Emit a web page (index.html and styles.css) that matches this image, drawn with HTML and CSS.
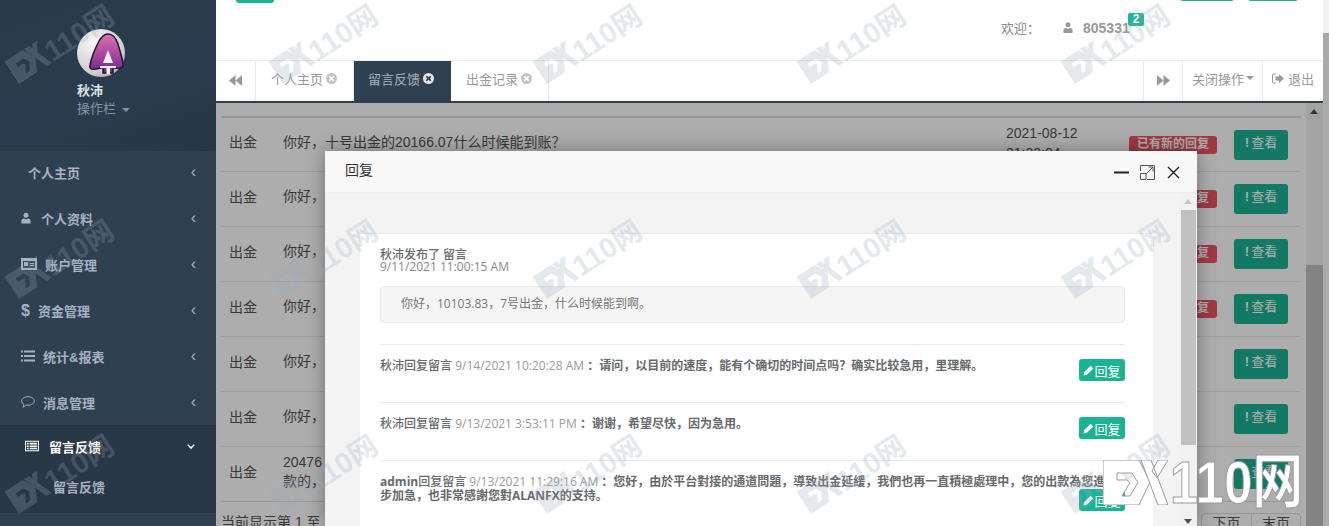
FILE: index.html
```html
<!DOCTYPE html>
<html lang="zh-CN">
<head>
    <meta charset="UTF-8">
    <meta name="viewport" content="width=device-width, initial-scale=1.0">
    <title>留言反馈</title>
    <link rel="stylesheet" href="styles.css">
</head>
<body>
    <svg class="icon-defs" width="0" height="0">
        <symbol id="i-user" viewBox="0 0 12 14"><circle cx="6" cy="3.6" r="3"/><path d="M0.5 13.5V10.5Q0.5 8 3 7.6L6 8.6L9 7.6Q11.500 8 11.500 10.5V13.5Z"/></symbol>
        <symbol id="i-close" viewBox="0 0 12 12"><path fill-rule="evenodd" d="M6 0a6 6 0 1 1 0 12A6 6 0 0 1 6 0ZM4.200 2.900L2.900 4.200L4.700 6L2.900 7.800L4.200 9.100L6 7.300L7.800 9.100L9.100 7.800L7.300 6L9.100 4.200L7.800 2.900L6 4.700Z"/></symbol>
        <symbol id="i-pencil" viewBox="0 0 12 12"><path d="M8.300 0.800L11.200 3.700L4.200 10.700L0.600 11.400L1.300 7.800Z"/></symbol>
        <symbol id="i-fx" viewBox="0 0 65 45">
            <path fill-rule="evenodd" d="M0 0H36L47 22L36 45H0ZM14 13V20H24L27 22.500L19 36H27L35 22.500L29 13Z"/>
            <path d="M38 0H48L65 45H55ZM55 0H65L54 18L49 11Z"/>
        </symbol>
    </svg>

    <div class="page">
        <aside class="sidebar">
            <div class="profile">
                <svg class="avatar" viewBox="0 0 48 48">
                    <defs>
                        <radialGradient id="ball" cx="0.35" cy="0.3" r="0.9">
                            <stop offset="0" stop-color="#f8f8f8"/>
                            <stop offset="0.7" stop-color="#cfcccf"/>
                            <stop offset="1" stop-color="#8a868c"/>
                        </radialGradient>
                        <linearGradient id="badge" x1="0" y1="0" x2="0" y2="1">
                            <stop offset="0" stop-color="#d873b0"/>
                            <stop offset="0.55" stop-color="#a8459c"/>
                            <stop offset="1" stop-color="#5f2a96"/>
                        </linearGradient>
                    </defs>
                    <circle cx="24" cy="24" r="24" fill="url(#ball)"/>
                    <path d="M31 5C36 5 39 9 41 15C43 22 46 31 46 36C46 39 43 40 38 39L36 38.500V44H26V38.500L19 40C15 41 12 40 13 36C14 31 18 20 21 14C24 8 27 5 31 5Z" fill="url(#badge)" stroke="#231530" stroke-width="1.500"/>
                    <path d="M31 21L36 34H26Z" fill="#f8f2f6"/>
                    <path d="M23 37H39V39H33V45H29.500V39H23Z" fill="#f8f2f6"/>
                </svg>
                <div class="profile-name">秋沛</div>
                <div class="profile-menu">操作栏 <span class="caret"></span></div>
            </div>
            <nav class="menu">
                <a class="menu-item"><span class="menu-label menu-label-plain">个人主页</span><span class="chev">‹</span></a>
                <a class="menu-item">
                    <svg class="menu-icon"><use href="#i-user"/></svg>
                    <span class="menu-label">个人资料</span><span class="chev">‹</span>
                </a>
                <a class="menu-item">
                    <svg class="menu-icon menu-icon-card" viewBox="0 0 16 12"><path fill-rule="evenodd" d="M0 0H16V12H0ZM2 3V10H14V3ZM3 4H7V8H3ZM9 5H13V6H9ZM9 7H13V8H9Z"/></svg>
                    <span class="menu-label menu-label-tight">账户管理</span><span class="chev">‹</span>
                </a>
                <a class="menu-item">
                    <span class="menu-dollar">$</span>
                    <span class="menu-label menu-label-near">资金管理</span><span class="chev">‹</span>
                </a>
                <a class="menu-item">
                    <svg class="menu-icon menu-icon-wide" viewBox="0 0 14 11"><path d="M0 0H2V2H0ZM3 0H14V2H3ZM0 4.500H2V6.500H0ZM3 4.500H14V6.500H3ZM0 9H2V11H0ZM3 9H14V11H3Z"/></svg>
                    <span class="menu-label menu-label-tight">统计&amp;报表</span><span class="chev">‹</span>
                </a>
                <a class="menu-item">
                    <svg class="menu-icon menu-icon-wide menu-icon-line" viewBox="0 0 14 12"><path d="M7 0.700C10.300 0.700 13.300 2.500 13.300 5C13.300 7.500 10.300 9.200 7 9.200C6.300 9.200 5.700 9.100 5.100 9C4.300 10.100 3 11 1.800 11.200C2.500 10.300 2.900 9.300 2.900 8.400C1.500 7.600 0.700 6.400 0.700 5C0.700 2.500 3.700 0.700 7 0.700Z"/></svg>
                    <span class="menu-label menu-label-tight">消息管理</span><span class="chev">‹</span>
                </a>
                <div class="menu-open">
                    <a class="menu-item menu-item-active">
                        <svg class="menu-icon menu-icon-wide" viewBox="0 0 15 11"><path fill-rule="evenodd" d="M0 0H15V11H0ZM1 1V10H14V1ZM2 2H4V4H2ZM5 2H13V4H5ZM2 5H4V6.500H2ZM5 5H13V6.500H5ZM2 7.500H4V9H2ZM5 7.500H13V9H5Z"/></svg>
                        <span class="menu-label">留言反馈</span>
                        <svg class="chev-down" viewBox="0 0 8 5"><path d="M0.800 0.800L4 4L7.200 0.800" fill="none" stroke="currentColor" stroke-width="1.600"/></svg>
                    </a>
                    <a class="submenu-item">留言反馈</a>
                </div>
            </nav>
        </aside>

        <main class="main">
            <header class="topbar">
                <span class="stub stub-left"></span>
                <span class="stub stub-right-a"></span>
                <span class="stub stub-right-b"></span>
                <span class="welcome">欢迎：</span>
                <svg class="top-user"><use href="#i-user"/></svg>
                <span class="account">805331<span class="account-badge">2</span></span>
            </header>

            <div class="tabbar">
                <button class="tab-arrow">
                    <svg viewBox="0 0 12 10"><path d="M6 0V10L0 5ZM12 0V10L6 5Z"/></svg>
                </button>
                <a class="tab">个人主页<svg class="tab-close"><use href="#i-close"/></svg></a>
                <a class="tab tab-active">留言反馈<svg class="tab-close"><use href="#i-close"/></svg></a>
                <a class="tab">出金记录<svg class="tab-close"><use href="#i-close"/></svg></a>
                <span class="tab-gap"></span>
                <button class="tab-arrow tab-arrow-right">
                    <svg viewBox="0 0 12 10"><path d="M0 0V10L6 5ZM6 0V10L12 5Z"/></svg>
                </button>
                <a class="tab-action tab-action-close">关闭操作<span class="caret"></span></a>
                <a class="tab-action tab-action-exit">
                    <svg class="exit-icon" viewBox="0 0 12 11"><path d="M4 1H1.500Q0.500 1 0.500 2V9Q0.500 10 1.500 10H4" fill="none" stroke="currentColor"/><path d="M7 1V3.500H3.500V7.500H7V10L12 5.500Z"/></svg>
                    退出
                </a>
            </div>

            <section class="content">
                <div class="table">
                    <div class="row">
                        <span class="cell-type">出金</span>
                        <span class="cell-text">你好，十号出金的20166.07什么时候能到账？</span>
                        <span class="cell-date">2021-08-12<br>21:22:04</span>
                        <span class="cell-state"><span class="label-new">已有新的回复</span></span>
                        <a class="btn-view"><b>!</b>查看</a>
                    </div>
                    <div class="row">
                        <span class="cell-type">出金</span>
                        <span class="cell-text">你好，</span>
                        <span class="cell-date"></span>
                        <span class="cell-state"><span class="label-new">已有新的回复</span></span>
                        <a class="btn-view"><b>!</b>查看</a>
                    </div>
                    <div class="row">
                        <span class="cell-type">出金</span>
                        <span class="cell-text">你好，</span>
                        <span class="cell-date"></span>
                        <span class="cell-state"><span class="label-new">已有新的回复</span></span>
                        <a class="btn-view"><b>!</b>查看</a>
                    </div>
                    <div class="row">
                        <span class="cell-type">出金</span>
                        <span class="cell-text">你好，</span>
                        <span class="cell-date"></span>
                        <span class="cell-state"><span class="label-new">已有新的回复</span></span>
                        <a class="btn-view"><b>!</b>查看</a>
                    </div>
                    <div class="row">
                        <span class="cell-type">出金</span>
                        <span class="cell-text">你好，</span>
                        <span class="cell-date"></span>
                        <span class="cell-state"></span>
                        <a class="btn-view"><b>!</b>查看</a>
                    </div>
                    <div class="row">
                        <span class="cell-type">出金</span>
                        <span class="cell-text">你好，</span>
                        <span class="cell-date"></span>
                        <span class="cell-state"></span>
                        <a class="btn-view"><b>!</b>查看</a>
                    </div>
                    <div class="row">
                        <span class="cell-type">出金</span>
                        <span class="cell-text">20476<br>款的，</span>
                        <span class="cell-date"></span>
                        <span class="cell-state"></span>
                        <a class="btn-view"><b>!</b>查看</a>
                    </div>
                    <div class="table-foot">
                        <span>当前显示第 1 至</span>
                        <span class="pager"><a>下页</a><a>末页</a></span>
                    </div>
                </div>
                <div class="inner-scroll">
                    <span class="scroll-up"></span>
                    <span class="inner-thumb"></span>
                </div>
                <div class="dim"></div>
            </section>
        </main>

        <div class="page-scroll"><span class="page-thumb"></span></div>
    </div>

    <div class="modal">
        <div class="modal-head">
            <span class="modal-title">回复</span>
            <span class="modal-tools">
                <svg viewBox="0 0 15 15"><path d="M0 7.500H15" stroke="#222" stroke-width="2"/></svg>
                <svg viewBox="0 0 15 15" fill="none" stroke="#555"><path d="M0.500 6V0.500H14.500V14.500H7M0.500 8.500H6V14.500H0.500ZM6 9L13 2M8.500 2H13V6.500"/></svg>
                <svg viewBox="0 0 15 15" fill="none" stroke="#222" stroke-width="1.400"><path d="M2 2L13 13M13 2L2 13"/></svg>
            </span>
        </div>
        <div class="modal-body">
            <div class="modal-pane">
                <div class="panel">
                    <div class="post-head">
                        <div class="post-author">秋沛发布了 留言</div>
                        <div class="post-time">9/11/2021 11:00:15 AM</div>
                    </div>
                    <div class="post-quote">你好，10103.83，7号出金，什么时候能到啊。</div>
                    <div class="reply">
                        <p><span class="reply-who">秋沛回复留言</span> <span class="reply-time">9/14/2021 10:20:28 AM</span> ：请问，以目前的速度，能有个确切的时间点吗？确实比较急用，里理解。</p>
                        <a class="btn-reply"><svg><use href="#i-pencil"/></svg>回复</a>
                    </div>
                    <div class="reply">
                        <p><span class="reply-who">秋沛回复留言</span> <span class="reply-time">9/13/2021 3:53:11 PM</span> ：谢谢，希望尽快，因为急用。</p>
                        <a class="btn-reply"><svg><use href="#i-pencil"/></svg>回复</a>
                    </div>
                    <div class="reply">
                        <p><span class="reply-who"><b>admin</b>回复留言</span> <span class="reply-time">9/13/2021 11:29:16 AM</span> ：您好，由於平台對接的通道問題，導致出金延緩，我們也再一直積極處理中，您的出款為您進<br>步加急，也非常感謝您對ALANFX的支持。</p>
                        <a class="btn-reply btn-reply-low"><svg><use href="#i-pencil"/></svg>回复</a>
                    </div>
                </div>
            </div>
            <div class="modal-scroll">
                <span class="scroll-up scroll-up-light"></span>
                <span class="modal-thumb"></span>
                <span class="scroll-down"></span>
            </div>
        </div>
    </div>

    <!-- repeated site watermark, sits above everything -->
    <div class="watermarks">
        <div class="watermark-grid">
            <span><svg><use href="#i-fx"/></svg>110网</span><span><svg><use href="#i-fx"/></svg>110网</span><span><svg><use href="#i-fx"/></svg>110网</span><span><svg><use href="#i-fx"/></svg>110网</span><span><svg><use href="#i-fx"/></svg>110网</span>
            <span><svg><use href="#i-fx"/></svg>110网</span><span><svg><use href="#i-fx"/></svg>110网</span><span><svg><use href="#i-fx"/></svg>110网</span><span><svg><use href="#i-fx"/></svg>110网</span><span><svg><use href="#i-fx"/></svg>110网</span>
            <span><svg><use href="#i-fx"/></svg>110网</span><span><svg><use href="#i-fx"/></svg>110网</span><span><svg><use href="#i-fx"/></svg>110网</span><span><svg><use href="#i-fx"/></svg>110网</span><span><svg><use href="#i-fx"/></svg>110网</span>
        </div>
    </div>
    <div class="stamp"><svg class="stamp-mark"><use href="#i-fx"/></svg><span class="stamp-text">110网</span></div>
</body>
</html>
```

FILE: styles.css
```css
* {
    box-sizing: border-box;
}

html, body {
    height: 100%;
}

body {
    margin: 0;
    overflow: hidden;
    position: relative;
    font-family: "Liberation Sans", "Noto Sans CJK SC", sans-serif;
    font-size: 13px;
    color: #676a6c;
    background-color: #fff;
}

a {
    color: inherit;
    text-decoration: none;
}

button {
    font: inherit;
    background: none;
    padding: 0;
    cursor: pointer;
}

.icon-defs {
    position: absolute;
}

.page {
    display: flex;
    height: 526px;
}

/* sidebar */
.sidebar {
    width: 216px;
    flex: none;
    background-color: #2f4050;
    color: #a7b1c2;
}

.profile {
    height: 151px;
    padding: 29px 0 0 77px;
    background: linear-gradient(160deg, #293b4b 0%, #2a3c4d 60%, #273848 100%);
}

.avatar {
    display: block;
    width: 48px;
    height: 48px;
}

.profile-name {
    margin-top: 5px;
    line-height: 18px;
    font-weight: bold;
    color: #dfe4ed;
}

.profile-menu {
    line-height: 18px;
    color: #8095a8;
}

.caret {
    display: inline-block;
    margin-left: 2px;
    vertical-align: middle;
    border-top: 4px solid currentColor;
    border-left: 4px solid transparent;
    border-right: 4px solid transparent;
}

.menu-item {
    display: flex;
    align-items: center;
    height: 46px;
    padding: 0 0 4px 21px;
    font-weight: bold;
}

.menu-icon {
    width: 10px;
    height: 12px;
    flex: none;
    fill: currentColor;
}

.menu-icon-wide {
    width: 14px;
}

.menu-icon-card {
    width: 16px;
}

.menu-icon-line {
    fill: none;
    stroke: currentColor;
}

.menu-dollar {
    width: 8px;
    margin-top: 2px;
    font-size: 16px;
    font-weight: bold;
    text-align: center;
}

.menu-label {
    margin-left: 10px;
}

.menu-label-plain {
    margin-left: 7px;
}

.menu-label-tight {
    margin-left: 8px;
}

.menu-label-near {
    margin-left: 9px;
}

.chev {
    margin-left: auto;
    margin-right: 20px;
    font-size: 16px;
    font-weight: normal;
    line-height: 1;
}

.menu-open {
    height: 88px;
    margin-top: -2px;
    background-color: #293846;
}

.menu-item-active {
    padding-left: 25px;
    color: #fff;
}

.chev-down {
    width: 8px;
    height: 5px;
    margin-left: auto;
    margin-right: 21px;
}

.submenu-item {
    display: block;
    padding-left: 53px;
    line-height: 34px;
    font-weight: bold;
}

/* main area */
.main {
    flex: 1;
    min-width: 0;
    display: flex;
    flex-direction: column;
}

.topbar {
    height: 60px;
    position: relative;
    display: flex;
    align-items: center;
    justify-content: flex-end;
    padding: 0 192px 5px 0;
    background-color: #fff;
}

.stub {
    position: absolute;
    top: 0;
    background-color: #1ab394;
    border-radius: 0 0 3px 3px;
}

.stub-left {
    left: 20px;
    width: 38px;
    height: 3px;
}

.stub-right-a {
    left: 965px;
    width: 52px;
    height: 1px;
}

.stub-right-b {
    left: 1033px;
    width: 48px;
    height: 1px;
}

.welcome {
    margin-right: 23px;
    color: #888;
}

.top-user {
    width: 10px;
    height: 13px;
    margin-right: 10px;
    fill: #999;
}

.account {
    position: relative;
    width: 48px;
    font-size: 14px;
    font-weight: bold;
    color: #999;
}

.account-badge {
    position: absolute;
    left: 45px;
    top: -7px;
    width: 16px;
    height: 13px;
    line-height: 13px;
    text-align: center;
    font-size: 12px;
    color: #fff;
    background-color: #23b597;
    border-radius: 2px;
}

.tabbar {
    height: 43px;
    display: flex;
    background-color: #fff;
    border-top: 1px solid #e7eaec;
    border-bottom: 2px solid #2f4050;
    color: #999;
}

.tab-arrow {
    width: 40px;
    border: 0;
    border-right: 1px solid #e7eaec;
}

.tab-arrow svg {
    width: 13px;
    height: 11px;
    fill: #999;
}

.tab-arrow-right {
    border-left: 1px solid #e7eaec;
}

.tab {
    display: flex;
    align-items: center;
    width: 98px;
    padding: 0 0 6px 15px;
    border-right: 1px solid #e7eaec;
}

.tab-close {
    width: 11px;
    height: 11px;
    margin: 1px 0 0 3px;
    fill: #c4c4c4;
}

.tab-active {
    width: 97px;
    padding-left: 14px;
    background-color: #2f4050;
    color: #a7b1c2;
    border-right: 0;
}

.tab-active .tab-close {
    fill: #e6e6e6;
}

.tab-gap {
    flex: 1;
}

.tab-action {
    display: flex;
    align-items: center;
    border-right: 1px solid #e7eaec;
    padding-bottom: 6px;
}

.tab-action-close {
    width: 80px;
    padding-left: 9px;
}

.tab-action-exit {
    width: 60px;
    padding-left: 9px;
    border-right: 0;
}

.exit-icon {
    width: 12px;
    height: 11px;
    margin-right: 4px;
    fill: currentColor;
}

/* dimmed page under the dialog */
.content {
    flex: 1;
    min-height: 0;
    position: relative;
    display: flex;
    background-color: #fff;
    overflow: hidden;
}

.table {
    flex: 1;
    min-width: 0;
    padding: 13px 5px 0 5px;
    font-size: 14px;
}

.row {
    height: 55px;
    display: flex;
    align-items: center;
    border-top: 1px solid #e7eaec;
    color: #555;
}

.row:first-child {
    border-top: 2px solid #ddd;
}

.cell-type {
    width: 62px;
    padding: 0 0 7px 8px;
    flex: none;
}

.cell-text {
    flex: 1;
    line-height: 19px;
    padding-bottom: 5px;
}

.cell-date {
    width: 123px;
    flex: none;
    line-height: 20px;
    align-self: flex-start;
    padding-top: 5px;
    height: 54px;
    overflow: hidden;
}

.cell-state {
    width: 105px;
    flex: none;
}

.label-new {
    display: block;
    width: 88px;
    height: 18px;
    line-height: 17px;
    text-align: center;
    font-size: 12px;
    font-weight: bold;
    color: #fff;
    background-color: #ed5565;
    border-radius: 3px;
}

.btn-view {
    width: 54px;
    height: 30px;
    line-height: 26px;
    margin-right: 13px;
    flex: none;
    text-align: center;
    font-size: 13px;
    color: #fff;
    background-color: #1ab394;
    border-radius: 3px;
}

.btn-view b {
    margin-right: 2px;
}

.table-foot {
    height: 30px;
    display: flex;
    justify-content: space-between;
    border-top: 1px solid #ddd;
    padding-top: 11px;
    color: #555;
    line-height: 18px;
}

.pager {
    display: flex;
    height: 34px;
    border: 1px solid #ddd;
    border-radius: 4px;
}

.pager a {
    width: 49px;
    text-align: center;
    border-left: 1px solid #ddd;
}

.pager a:first-child {
    border-left: 0;
}

.inner-scroll {
    width: 17px;
    flex: none;
    position: relative;
    background-color: #f1f1f1;
}

.inner-thumb {
    position: absolute;
    left: 0;
    right: 0;
    top: 162px;
    bottom: 0;
    background-color: #c1c1c1;
}

.dim {
    position: absolute;
    inset: 0;
    background-color: rgba(0, 0, 0, 0.32);
}

.scroll-up, .scroll-down {
    position: absolute;
    left: 4px;
    border-left: 4px solid transparent;
    border-right: 4px solid transparent;
}

.scroll-up {
    top: 6px;
    border-bottom: 5px solid #505050;
}

.scroll-up-light {
    border-bottom-color: #c4c4c4;
}

.scroll-down {
    bottom: 2px;
    border-top: 5px solid #505050;
}

.page-scroll {
    width: 6px;
    flex: none;
    position: relative;
    background-color: #f1f1f1;
}

.page-thumb {
    position: absolute;
    left: 0;
    right: 0;
    top: 33px;
    bottom: 0;
    background-color: #aaa;
}

/* dialog */
.modal {
    position: absolute;
    left: 325px;
    top: 151px;
    width: 872px;
    height: 375px;
    display: flex;
    flex-direction: column;
    background-color: #f3f3f3;
    box-shadow: 0 0 18px rgba(0, 0, 0, 0.35);
}

.modal-head {
    height: 42px;
    flex: none;
    display: flex;
    align-items: center;
    justify-content: space-between;
    padding: 0 16px 5px 20px;
    background-color: #f8f8f8;
    border-bottom: 1px solid #eee;
}

.modal-title {
    font-size: 14px;
    color: #333;
}

.modal-tools {
    display: flex;
    gap: 11px;
    padding-top: 7px;
}

.modal-tools svg {
    width: 15px;
    height: 15px;
}

.modal-body {
    flex: 1;
    min-height: 0;
    display: flex;
    overflow: hidden;
}

.modal-pane {
    flex: 1;
    min-width: 0;
    padding: 40px 27px 0 35px;
}

.panel {
    height: 342px;
    padding: 0 28px 0 20px;
    background-color: #fff;
    border-top: 1px solid #e7eaec;
    font-family: "Open Sans", "Noto Sans CJK SC", sans-serif;
}

.post-head {
    padding-top: 15px;
    height: 52px;
    line-height: 12px;
    font-size: 12px;
    color: #676a6c;
}

.post-author {
    font-weight: 500;
}

.post-time {
    color: #888;
}

.post-quote {
    height: 37px;
    padding-left: 20px;
    line-height: 34px;
    font-size: 12px;
    color: #777;
    background-color: #f5f5f5;
    border: 1px solid #e7eaec;
    border-radius: 4px;
}

.reply {
    display: flex;
    align-items: flex-start;
    height: 58px;
    padding-top: 14px;
    border-top: 1px solid #e7eaec;
    font-size: 12px;
    font-weight: bold;
    color: #676a6c;
}

.post-quote + .reply {
    margin-top: 21px;
}

.reply p {
    flex: none;
    width: 100%;
    margin: 0;
    line-height: 14px;
    white-space: nowrap;
}

.reply-who {
    font-weight: 500;
}

.reply-time {
    font-weight: normal;
    color: #999;
}

.btn-reply {
    width: 46px;
    height: 22px;
    flex: none;
    margin-left: -46px;
    display: flex;
    align-items: center;
    justify-content: center;
    font-family: "Liberation Sans", "Noto Sans CJK SC", sans-serif;
    font-size: 13px;
    font-weight: normal;
    color: #fff;
    background-color: #1ab394;
    border-radius: 3px;
}

.btn-reply svg {
    width: 11px;
    height: 11px;
    fill: #fff;
}

.btn-reply-low {
    margin-top: 14px;
}

.modal-scroll {
    width: 17px;
    flex: none;
    position: relative;
    background-color: #f1f1f1;
}

.modal-thumb {
    position: absolute;
    left: 1px;
    right: 1px;
    top: 17px;
    height: 235px;
    background-color: #c1c1c1;
}

/* watermark overlay */
.watermarks {
    position: absolute;
    inset: 0;
    overflow: hidden;
    pointer-events: none;
}

.watermark-grid {
    display: grid;
    grid-template-columns: repeat(5, 264px);
    grid-auto-rows: 215px;
    margin: -66px 0 0 -72px;
}

.watermark-grid span {
    display: flex;
    align-items: center;
    justify-content: center;
    gap: 1px;
    font-size: 29px;
    font-weight: bold;
    white-space: nowrap;
    color: rgba(150, 170, 185, 0.26);
    transform: rotate(-33deg);
}

.watermark-grid svg {
    width: 40px;
    height: 27px;
    fill: currentColor;
}

.stamp {
    position: absolute;
    left: 1103px;
    top: 460px;
    display: flex;
    align-items: center;
    height: 45px;
    pointer-events: none;
}

.stamp-mark {
    width: 65px;
    height: 45px;
    flex: none;
    fill: #fff;
    stroke: #9a9a9a;
    stroke-width: 1px;
    overflow: visible;
}

.stamp-text {
    margin-left: 2px;
    font-size: 60px;
    line-height: 45px;
    font-weight: bold;
    white-space: nowrap;
    color: #fff;
    -webkit-text-stroke: 1px #9a9a9a;
    transform: scaleX(0.85);
    transform-origin: left center;
}
```
